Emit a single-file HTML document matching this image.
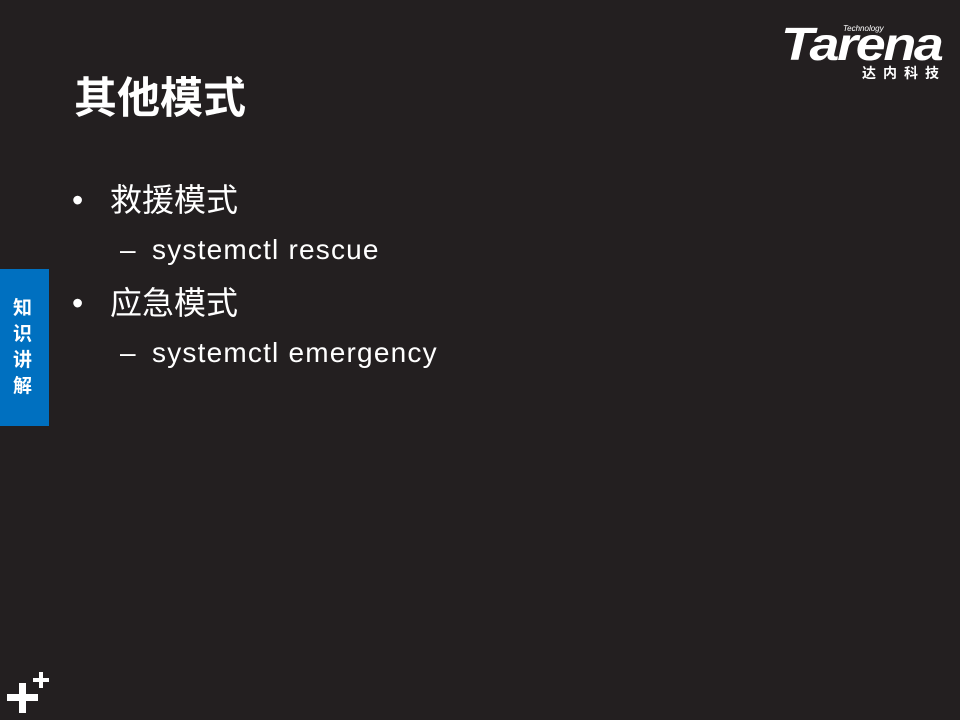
<!DOCTYPE html>
<html><head><meta charset="utf-8"><style>
html,body{margin:0;padding:0}
body{width:960px;height:720px;background:#231f20;position:relative;overflow:hidden;font-family:"Liberation Sans","Noto Sans CJK SC",sans-serif;color:#fff}
.a{position:absolute;white-space:nowrap}
.title{left:74px;top:74px;font-size:43px;font-weight:bold;line-height:50px}
.l1{font-size:32px;line-height:40px}
.l2{font-size:28px;line-height:36px;letter-spacing:1.2px}
.side{left:0;top:269px;width:49px;height:157px;background:#0070c0}
.side div{position:absolute;left:13px;font-size:19px;font-weight:bold;line-height:20px}
</style></head><body>
<div class="a title">其他模式</div>
<div class="a l1" style="left:72px;top:180px">•</div>
<div class="a l1" style="left:110px;top:180px">救援模式</div>
<div class="a l2" style="left:120px;top:232px">–</div>
<div class="a l2" style="left:152px;top:232px">systemctl rescue</div>
<div class="a l1" style="left:72px;top:283px">•</div>
<div class="a l1" style="left:110px;top:283px">应急模式</div>
<div class="a l2" style="left:120px;top:335px">–</div>
<div class="a l2" style="left:152px;top:335px">systemctl emergency</div>
<div class="a side"><div style="top:30px">知</div><div style="top:56px">识</div><div style="top:82px">讲</div><div style="top:108px">解</div></div>
<div class="a" style="left:843px;top:24px;font-size:8px;font-style:italic">Technology</div>
<div class="a" style="left:781px;top:18px;font-size:46px;font-weight:bold;font-style:italic;letter-spacing:-2px;line-height:52px;transform:scaleX(1.17);transform-origin:0 0">Tarena</div>
<div class="a" style="left:862px;top:63px;font-size:14px;font-weight:bold;letter-spacing:7px">达内科技</div>
<div class="a" style="left:7px;top:694px;width:31px;height:7px;background:#fff"></div>
<div class="a" style="left:19px;top:683px;width:7px;height:30px;background:#fff"></div>
<div class="a" style="left:33px;top:678px;width:16px;height:4px;background:#fff"></div>
<div class="a" style="left:39px;top:672px;width:4px;height:16px;background:#fff"></div>
</body></html>
